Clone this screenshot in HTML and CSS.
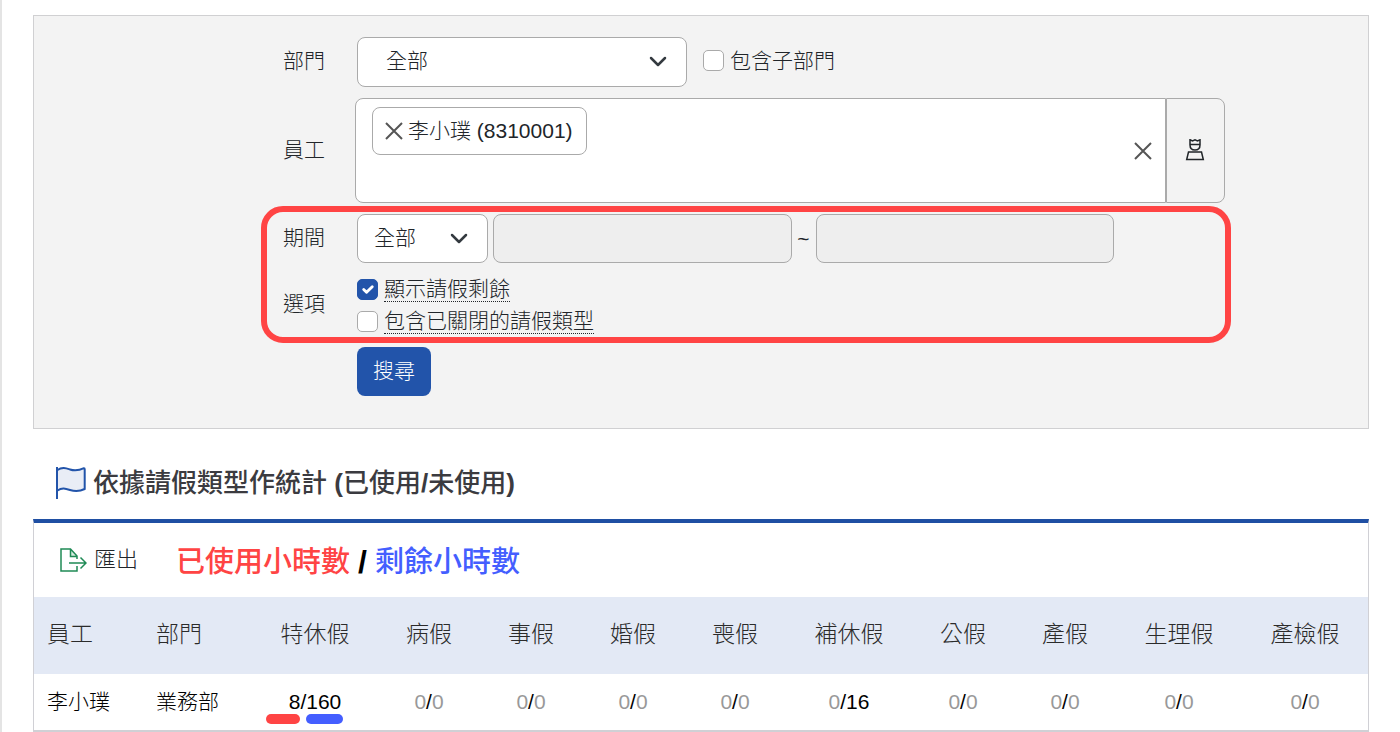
FILE: index.html
```html
<!DOCTYPE html>
<html lang="zh-Hant">
<head>
<meta charset="utf-8">
<title>請假統計</title>
<link rel="stylesheet" href="styles.css">
</head>
<body>
<main class="page">
  <form class="filter">
    <div class="row">
      <label class="row-label" for="dept">部門</label>
      <div class="field field-dept">
        <span class="select-box select-wide">
          <select id="dept"><option>全部</option></select>
          <svg class="chevron" viewBox="0 0 18 12"><path d="M2 2l7 7 7-7"/></svg>
        </span>
        <label class="check"><input type="checkbox"><span>包含子部門</span></label>
      </div>
    </div>

    <div class="row">
      <span class="row-label">員工</span>
      <div class="picker">
        <div class="picker-list">
          <span class="tag">
            <button type="button" class="icon-button" aria-label="移除"><svg class="cross" viewBox="0 0 18 18"><path d="M1 1l16 16M17 1L1 17"/></svg></button>
            <span>李小璞 (8310001)</span>
          </span>
          <button type="button" class="icon-button" aria-label="清除"><svg class="cross" viewBox="0 0 18 18"><path d="M1 1l16 16M17 1L1 17"/></svg></button>
        </div>
        <button type="button" class="picker-open" aria-label="選擇員工">
          <svg class="person" viewBox="0 0 20 22"><path d="M5 .8l2.500 1.200L10 .8l2.500 1.200L15 .8V6c0 3.200-2.200 5-5 5s-5-1.800-5-5zM5 5.500h10M3.500 13h13l1.800 7.500H1.700z"/></svg>
        </button>
      </div>
    </div>

    <div class="highlight">
      <div class="row">
        <label class="row-label" for="period">期間</label>
        <div class="field field-period">
          <span class="select-box select-small">
            <select id="period"><option>全部</option></select>
            <svg class="chevron" viewBox="0 0 18 12"><path d="M2 2l7 7 7-7"/></svg>
          </span>
          <input class="date" type="text" aria-label="開始日期" disabled>
          <span class="tilde">~</span>
          <input class="date" type="text" aria-label="結束日期" disabled>
        </div>
      </div>
      <div class="row">
        <span class="row-label">選項</span>
        <div class="field field-options">
          <label class="check"><input type="checkbox" checked><span class="hint">顯示請假剩餘</span></label>
          <label class="check"><input type="checkbox"><span class="hint">包含已關閉的請假類型</span></label>
        </div>
      </div>
    </div>

    <div class="row">
      <span class="row-label"></span>
      <div class="field"><button type="submit" class="search">搜尋</button></div>
    </div>
  </form>

  <section>
    <h2 class="title">
      <svg class="flag" viewBox="0 0 32 34"><path class="flag-cloth" d="M2.500 4C7 .8 11 2.200 15 3.500s8 1.500 14-1.300c.7 0 .7.500.7 1V23c-5 2.500-10 2.500-14.700 1S7 21.500 2.500 24.500"/><path d="M2 1v32"/></svg>
      <span>依據請假類型作統計 <b>(</b>已使用<b>/</b>未使用<b>)</b></span>
    </h2>
    <div class="card">
      <div class="toolbar">
        <button type="button" class="export">
          <svg class="export-icon" viewBox="0 0 27 24"><path class="export-fold" d="M10.500 1v7.500H17z"/><path d="M17 11V8L10.500 1H1v22h16v-5M10.500 1v7.500H17M9 15h17M20.500 9.500L26 15l-5.500 5.500"/></svg>
          <span>匯出</span>
        </button>
        <p class="legend"><span class="used">已使用小時數</span><b>/</b><span class="left">剩餘小時數</span></p>
      </div>
      <table class="stats">
        <colgroup>
          <col class="c-name"><col class="c-name"><col class="c-long"><col class="c-short"><col class="c-short"><col class="c-short"><col class="c-short"><col class="c-long"><col class="c-short"><col class="c-short"><col class="c-long"><col class="c-long">
        </colgroup>
        <thead>
          <tr><th class="start">員工</th><th class="start">部門</th><th>特休假</th><th>病假</th><th>事假</th><th>婚假</th><th>喪假</th><th>補休假</th><th>公假</th><th>產假</th><th>生理假</th><th>產檢假</th></tr>
        </thead>
        <tbody>
          <tr>
            <td class="start">李小璞</td><td class="start">業務部</td>
            <td class="marked">8/160<span class="marks"><i class="mark-used"></i><i class="mark-left"></i></span></td>
            <td><s>0</s>/<s>0</s></td><td><s>0</s>/<s>0</s></td><td><s>0</s>/<s>0</s></td><td><s>0</s>/<s>0</s></td>
            <td><s>0</s>/16</td>
            <td><s>0</s>/<s>0</s></td><td><s>0</s>/<s>0</s></td><td><s>0</s>/<s>0</s></td><td><s>0</s>/<s>0</s></td>
          </tr>
        </tbody>
      </table>
    </div>
  </section>
</main>
</body>
</html>
```
FILE: styles.css
```css
* { box-sizing: border-box; }
body {
  margin: 0;
  background: #fff;
  color: #212529;
  font: 300 21px/30px "Liberation Sans", "Noto Sans CJK TC", sans-serif;
}
button, input, select { font: inherit; color: inherit; }
svg { display: block; fill: none; stroke: currentColor; }

.page {
  min-height: 100vh;
  padding: 15px 31px 0;
  border-left: 2px solid #e4e4e4;
}

/* Filter form */
.filter {
  display: flex;
  flex-direction: column;
  gap: 11px;
  padding: 21px 143px 32px 249px;
  background: #f3f3f3;
  border: 1px solid #d0d0d2;
}
.row { display: flex; align-items: center; }
.row-label { flex: 0 0 72px; padding-bottom: 2px; }
.field { flex: 1; display: flex; padding-left: 2px; }
.field-dept { align-items: center; gap: 16px; }

.select-box { position: relative; display: block; }
.select-box select {
  appearance: none;
  display: block;
  width: 100%;
  height: 50px;
  padding: 0 16px 2px;
  background: #fff;
  border: 1px solid #aaa;
  border-radius: 8px;
}
.select-wide { width: 330px; }
.select-wide select { padding-left: 28px; }
.select-small { width: 131px; }
.chevron {
  position: absolute;
  right: 20px;
  top: 50%;
  width: 18px;
  height: 12px;
  margin-top: -6px;
  color: #343a40;
  stroke-width: 2.5;
  stroke-linecap: round;
  stroke-linejoin: round;
  pointer-events: none;
}

.check { display: flex; align-items: center; gap: 6px; }
.field-dept .check { padding-bottom: 3px; }
.check input {
  appearance: none;
  width: 21px;
  height: 21px;
  margin: 0;
  background: #fff;
  border: 1px solid #aaa;
  border-radius: 5px;
}
.check input:checked {
  border-color: #2254aa;
  background: #2254aa url("data:image/svg+xml,%3Csvg xmlns='http://www.w3.org/2000/svg' viewBox='0 0 20 20'%3E%3Cpath fill='none' stroke='%23fff' stroke-width='3' stroke-linecap='round' stroke-linejoin='round' d='M6 10l3 3 6-6'/%3E%3C/svg%3E") center / 100%;
}
.hint { line-height: 25px; border-bottom: 1px dotted #212529; }

.picker { flex: 1; display: flex; height: 105px; }
.picker-list {
  flex: 1;
  display: flex;
  align-items: center;
  justify-content: space-between;
  padding: 8px 13px 8px 16px;
  background: #fff;
  border: 1px solid #aaa;
  border-radius: 8px 0 0 8px;
}
.tag {
  display: flex;
  align-items: center;
  align-self: flex-start;
  gap: 5px;
  height: 48px;
  padding: 0 13px 0 12px;
  border: 1px solid #aaa;
  border-radius: 8px;
}
.icon-button { padding: 0; border: 0; background: none; }
.cross { width: 18px; height: 18px; color: #555; stroke-width: 2; }
.picker-open {
  width: 59px;
  padding: 0 0 2px 18px;
  background: #f3f3f3;
  border: 1px solid #aaa;
  border-radius: 0 8px 8px 0;
}
.person { width: 20px; height: 22px; stroke-width: 1.5; }

.highlight {
  position: relative;
  display: flex;
  flex-direction: column;
  gap: 13px;
  padding-bottom: 2px;
}
.highlight::after {
  content: "";
  position: absolute;
  inset: -8px -6px -7px -22px;
  border: 6px solid #ff4444;
  border-radius: 22px;
  pointer-events: none;
}
.field-period { align-items: center; gap: 5px; padding-right: 111px; }
.select-small select, .date { height: 49px; }
.date {
  flex: 1;
  min-width: 0;
  background: #eee;
  border: 1px solid #aaa;
  border-radius: 8px;
}
.tilde { width: 14px; text-align: center; }
.field-options { flex-direction: column; align-items: flex-start; gap: 6px; }
.search {
  height: 49px;
  padding: 0 16px 2px;
  color: #fff;
  background: #2254aa;
  border: 0;
  border-radius: 8px;
}

/* Results */
.title {
  display: flex;
  align-items: center;
  gap: 6px;
  margin: 0;
  padding: 36px 22px 18px;
  color: #3b3b40;
  font-size: 26px;
  line-height: 36px;
  font-weight: 500;
}
.flag { width: 32px; height: 34px; color: #2254aa; stroke-width: 2; }
.flag-cloth { fill: #e9edf6; }
.card {
  border: 1px solid #d0d0d5;
  border-width: 4px 1px 2px;
  border-top-color: #1f4fa3;
}
.toolbar { display: flex; align-items: center; gap: 38px; height: 74px; padding: 0 26px; }
.export {
  display: flex;
  align-items: center;
  gap: 7px;
  padding: 0;
  border: 0;
  background: none;
  font-size: 22px;
}
.export-icon { width: 27px; height: 24px; color: #1f8a55; stroke-width: 1.5; }
.export-fold { fill: #d5ede0; stroke: none; }
.legend {
  display: flex;
  gap: 8px;
  margin: 0;
  padding-top: 4px;
  font-size: 29px;
  line-height: 40px;
  font-weight: 500;
}
.legend b { color: #000; font-size: 32px; }
.used { color: #ff4444; }
.left { color: #445eff; }

.stats { width: 100%; table-layout: fixed; border-collapse: collapse; color: #000; }
.c-name { width: 109px; }
.c-long { width: 126px; }
.c-short { width: 102px; }
.stats th {
  height: 77px;
  padding: 0 0 3px;
  color: #2b2b2b;
  background: #e3e9f5;
  font-size: 23px;
  font-weight: 300;
}
.stats td { height: 56px; padding: 0; text-align: center; }
.stats .start { padding-left: 13px; text-align: left; }
.stats s { color: #999; text-decoration: none; }
.marked { position: relative; }
.marks { position: absolute; left: 14px; bottom: 6px; display: flex; gap: 6px; }
.marks i { height: 10px; border-radius: 5px; }
.mark-used { width: 34px; background: #ff4444; }
.mark-left { width: 37px; background: #445eff; }
```
